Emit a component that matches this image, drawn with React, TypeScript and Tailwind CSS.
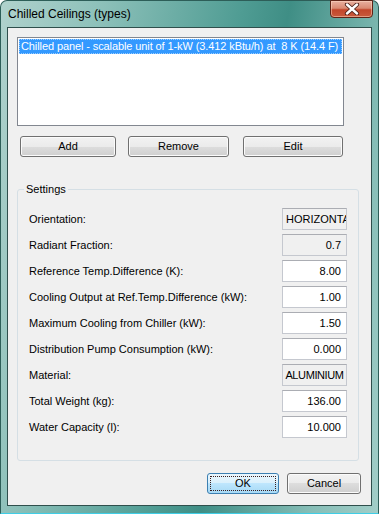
import React from 'react';

const font = "font-['Liberation_Sans',Arial,sans-serif]";

type Row = { label: string; value: string; readOnly?: boolean; align?: 'left' | 'right' | 'center' };

const rows: Row[] = [
  { label: 'Orientation:', value: 'HORIZONTAL', readOnly: true, align: 'left' },
  { label: 'Radiant Fraction:', value: '0.7', readOnly: true },
  { label: 'Reference Temp.Difference (K):', value: '8.00' },
  { label: 'Cooling Output at Ref.Temp.Difference (kW):', value: '1.00' },
  { label: 'Maximum Cooling from Chiller (kW):', value: '1.50' },
  { label: 'Distribution Pump Consumption (kW):', value: '0.000' },
  { label: 'Material:', value: 'ALUMINIUM', readOnly: true, align: 'center' },
  { label: 'Total Weight (kg):', value: '136.00' },
  { label: 'Water Capacity (l):', value: '10.000' },
];

const alignCls = {
  left: 'justify-start pl-[3px]',
  right: 'justify-end pr-[5px]',
  center: 'justify-center tracking-[-0.4px]',
};

const VistaButton = ({ label, w, isDefault }: { label: string; w: string; isDefault?: boolean }) => (
  <button
    className={`${w} h-[21px] rounded-[3px] border text-[11px] leading-none text-black flex items-center justify-center ${
      isDefault
        ? 'border-[#3c7fb1] bg-[linear-gradient(#eaf6fd_0%,#d9f0fc_50%,#bee6fd_50%,#a7d9f5_100%)] outline-1 outline-dotted outline-[#3a2020] outline-offset-[-4px]'
        : 'border-[#707070] bg-[linear-gradient(#f2f2f2_0%,#ebebeb_50%,#dddddd_50%,#cfcfcf_100%)] shadow-[inset_0_0_0_1px_#fbfbfb]'
    }`}
  >
    {label}
  </button>
);

export default function App() {
  return (
    <div
      className={`${font} w-[379px] h-[514px] flex flex-col rounded-t-[7px] border border-[#2d5e58] border-b-[#3fcde6] bg-[linear-gradient(100deg,#b0d2cd_0%,#8cc0b9_22%,#4f9c93_52%,#3f8e85_62%,#85bdb6_85%,#a2cec8_100%)]`}
    >
      {/* Title bar */}
      <div className="h-[26px] flex items-start shrink-0">
        <span className="pl-[7px] pt-[6px] text-[12px] leading-[15px] text-black">Chilled Ceilings (types)</span>
        <div className="ml-auto mr-[5px] mt-[-1px] w-[43px] h-[18px] rounded-b-[4px] border border-[#5e2417] bg-[linear-gradient(#e8b0a0_0%,#d98a73_45%,#c2462b_55%,#c85a3c_100%)] shadow-[inset_0_0_0_1px_rgba(255,220,200,0.5)] flex items-center justify-center">
          <svg width="16" height="12" viewBox="0 0 16 12">
            <path d="M3 1.5 L13 10.5 M13 1.5 L3 10.5" stroke="#4a2018" strokeWidth="4.2" strokeLinecap="round" />
            <path d="M3 1.5 L13 10.5 M13 1.5 L3 10.5" stroke="#ffffff" strokeWidth="2.4" strokeLinecap="round" />
          </svg>
        </div>
      </div>

      {/* Client area */}
      <div className="mx-[6px] h-[479px] border border-[#2f4f4c] bg-[#f0f0f0] flex flex-col text-[11px] text-black">
        {/* Listbox */}
        <div className="ml-[9px] mt-[9px] w-[327px] h-[89px] border border-[#828790] bg-white p-[1px]">
          <div className="h-[15px] bg-[#3399ff] text-white leading-[15px] pl-[2px] whitespace-nowrap tracking-[-0.1px] outline-1 outline-dotted outline-[#99ccff] outline-offset-[-1px]">
            Chilled panel - scalable unit of 1-kW (3.412 kBtu/h) at&nbsp; 8 K (14.4 F)
          </div>
        </div>

        {/* Add / Remove / Edit */}
        <div className="flex mt-[10px] ml-[12px]">
          <VistaButton label="Add" w="w-[96px]" />
          <div className="w-[12px]" />
          <VistaButton label="Remove" w="w-[101px]" />
          <div className="w-[14px]" />
          <VistaButton label="Edit" w="w-[100px]" />
        </div>

        {/* Settings group */}
        <fieldset className="ml-[9px] mt-[26px] w-[342px] rounded-[3px] border border-[#d5dfe5] px-[11px] pt-[12px] pb-[22px]">
          <legend className="ml-[-5px] px-[2px] leading-[13px] text-[11px]">Settings</legend>
          <div className="flex flex-col gap-[4px]">
            {rows.map((r) => (
              <div key={r.label} className="flex items-center justify-between h-[22px]">
                <span className="leading-[13px]">{r.label}</span>
                <div
                  className={`w-[65px] h-[22px] overflow-hidden whitespace-nowrap border border-[#c5c8cf] border-t-[#abadb3] flex items-center leading-[13px] ${
                    r.readOnly ? 'bg-[#f0f0f0]' : 'bg-white'
                  } ${alignCls[r.align ?? 'right']}`}
                >
                  {r.value}
                </div>
              </div>
            ))}
          </div>
        </fieldset>

        {/* OK / Cancel */}
        <div className="flex justify-end mt-[12px] pr-[10px] gap-[8px]">
          <VistaButton label="OK" w="w-[72px]" isDefault />
          <VistaButton label="Cancel" w="w-[74px]" />
        </div>
      </div>
    </div>
  );
}
